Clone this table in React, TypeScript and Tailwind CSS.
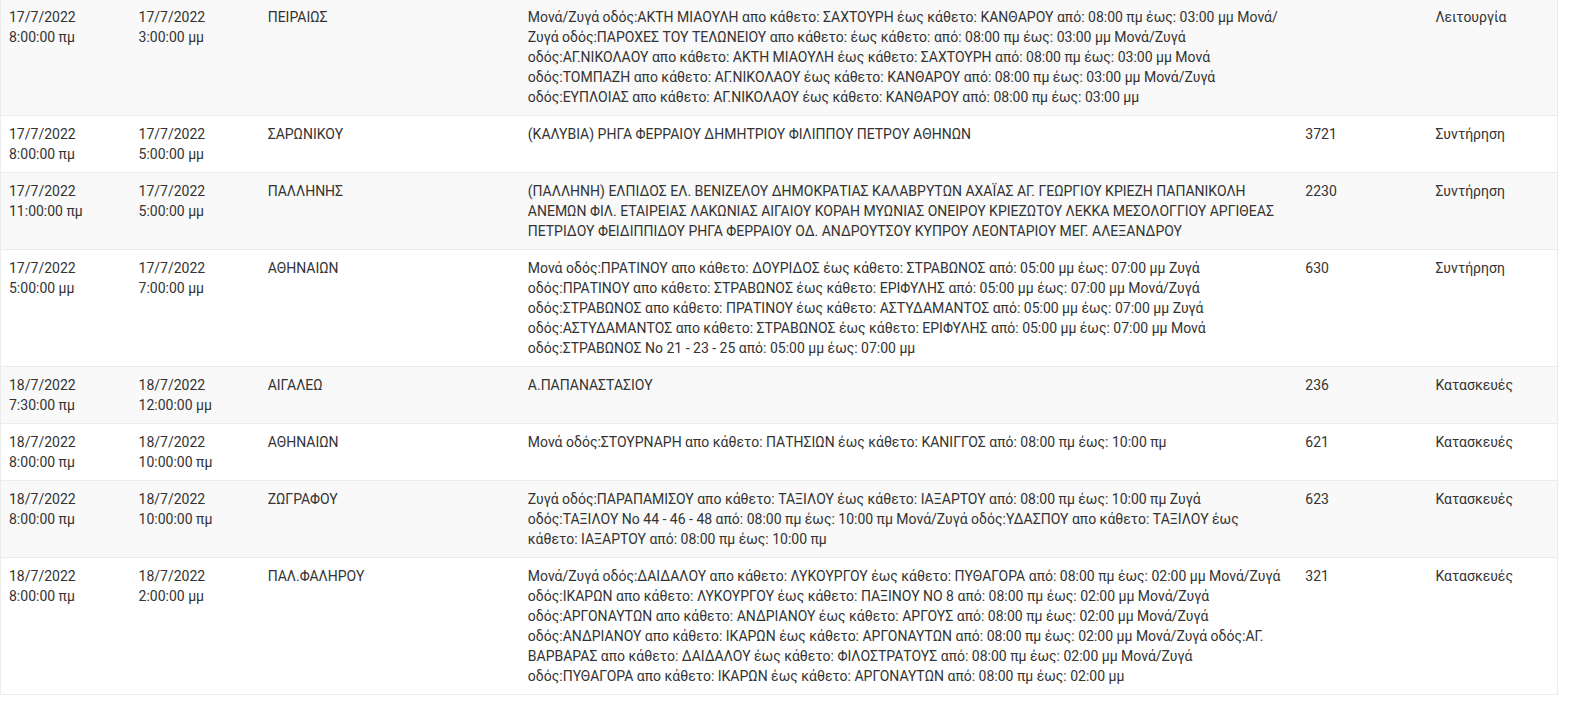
type Outage = {
  from: [string, string]
  to: [string, string]
  area: string
  streets: string
  id: string
  kind: string
}

const rows: Outage[] = [
  {
    from: ['17/7/2022', '8:00:00 πμ'],
    to: ['17/7/2022', '3:00:00 μμ'],
    area: 'ΠΕΙΡΑΙΩΣ',
    streets:
      'Μονά/Ζυγά οδός:ΑΚΤΗ ΜΙΑΟΥΛΗ απο κάθετο: ΣΑΧΤΟΥΡΗ έως κάθετο: ΚΑΝΘΑΡΟΥ από: 08:00 πμ έως: 03:00 μμ Μονά/Ζυγά οδός:ΠΑΡΟΧΕΣ ΤΟΥ ΤΕΛΩΝΕΙΟΥ απο κάθετο: έως κάθετο: από: 08:00 πμ έως: 03:00 μμ Μονά/Ζυγά οδός:ΑΓ.ΝΙΚΟΛΑΟΥ απο κάθετο: ΑΚΤΗ ΜΙΑΟΥΛΗ έως κάθετο: ΣΑΧΤΟΥΡΗ από: 08:00 πμ έως: 03:00 μμ Μονά οδός:ΤΟΜΠΑΖΗ απο κάθετο: ΑΓ.ΝΙΚΟΛΑΟΥ έως κάθετο: ΚΑΝΘΑΡΟΥ από: 08:00 πμ έως: 03:00 μμ Μονά/Ζυγά οδός:ΕΥΠΛΟΙΑΣ απο κάθετο: ΑΓ.ΝΙΚΟΛΑΟΥ έως κάθετο: ΚΑΝΘΑΡΟΥ από: 08:00 πμ έως: 03:00 μμ',
    id: '',
    kind: 'Λειτουργία',
  },
  {
    from: ['17/7/2022', '8:00:00 πμ'],
    to: ['17/7/2022', '5:00:00 μμ'],
    area: 'ΣΑΡΩΝΙΚΟΥ',
    streets: '(ΚΑΛΥΒΙΑ) ΡΗΓΑ ΦΕΡΡΑΙΟΥ ΔΗΜΗΤΡΙΟΥ ΦΙΛΙΠΠΟΥ ΠΕΤΡΟΥ ΑΘΗΝΩΝ',
    id: '3721',
    kind: 'Συντήρηση',
  },
  {
    from: ['17/7/2022', '11:00:00 πμ'],
    to: ['17/7/2022', '5:00:00 μμ'],
    area: 'ΠΑΛΛΗΝΗΣ',
    streets:
      '(ΠΑΛΛΗΝΗ) ΕΛΠΙΔΟΣ ΕΛ. ΒΕΝΙΖΕΛΟΥ ΔΗΜΟΚΡΑΤΙΑΣ ΚΑΛΑΒΡΥΤΩΝ ΑΧΑΪΑΣ ΑΓ. ΓΕΩΡΓΙΟΥ ΚΡΙΕΖΗ ΠΑΠΑΝΙΚΟΛΗ ΑΝΕΜΩΝ ΦΙΛ. ΕΤΑΙΡΕΙΑΣ ΛΑΚΩΝΙΑΣ ΑΙΓΑΙΟΥ ΚΟΡΑΗ ΜΥΩΝΙΑΣ ΟΝΕΙΡΟΥ ΚΡΙΕΖΩΤΟΥ ΛΕΚΚΑ ΜΕΣΟΛΟΓΓΙΟΥ ΑΡΓΙΘΕΑΣ ΠΕΤΡΙΔΟΥ ΦΕΙΔΙΠΠΙΔΟΥ ΡΗΓΑ ΦΕΡΡΑΙΟΥ ΟΔ. ΑΝΔΡΟΥΤΣΟΥ ΚΥΠΡΟΥ ΛΕΟΝΤΑΡΙΟΥ ΜΕΓ. ΑΛΕΞΑΝΔΡΟΥ',
    id: '2230',
    kind: 'Συντήρηση',
  },
  {
    from: ['17/7/2022', '5:00:00 μμ'],
    to: ['17/7/2022', '7:00:00 μμ'],
    area: 'ΑΘΗΝΑΙΩΝ',
    streets:
      'Μονά οδός:ΠΡΑΤΙΝΟΥ απο κάθετο: ΔΟΥΡΙΔΟΣ έως κάθετο: ΣΤΡΑΒΩΝΟΣ από: 05:00 μμ έως: 07:00 μμ Ζυγά οδός:ΠΡΑΤΙΝΟΥ απο κάθετο: ΣΤΡΑΒΩΝΟΣ έως κάθετο: ΕΡΙΦΥΛΗΣ από: 05:00 μμ έως: 07:00 μμ Μονά/Ζυγά οδός:ΣΤΡΑΒΩΝΟΣ απο κάθετο: ΠΡΑΤΙΝΟΥ έως κάθετο: ΑΣΤΥΔΑΜΑΝΤΟΣ από: 05:00 μμ έως: 07:00 μμ Ζυγά οδός:ΑΣΤΥΔΑΜΑΝΤΟΣ απο κάθετο: ΣΤΡΑΒΩΝΟΣ έως κάθετο: ΕΡΙΦΥΛΗΣ από: 05:00 μμ έως: 07:00 μμ Μονά οδός:ΣΤΡΑΒΩΝΟΣ Νο 21 - 23 - 25 από: 05:00 μμ έως: 07:00 μμ',
    id: '630',
    kind: 'Συντήρηση',
  },
  {
    from: ['18/7/2022', '7:30:00 πμ'],
    to: ['18/7/2022', '12:00:00 μμ'],
    area: 'ΑΙΓΑΛΕΩ',
    streets: 'Α.ΠΑΠΑΝΑΣΤΑΣΙΟΥ',
    id: '236',
    kind: 'Κατασκευές',
  },
  {
    from: ['18/7/2022', '8:00:00 πμ'],
    to: ['18/7/2022', '10:00:00 πμ'],
    area: 'ΑΘΗΝΑΙΩΝ',
    streets: 'Μονά οδός:ΣΤΟΥΡΝΑΡΗ απο κάθετο: ΠΑΤΗΣΙΩΝ έως κάθετο: ΚΑΝΙΓΓΟΣ από: 08:00 πμ έως: 10:00 πμ',
    id: '621',
    kind: 'Κατασκευές',
  },
  {
    from: ['18/7/2022', '8:00:00 πμ'],
    to: ['18/7/2022', '10:00:00 πμ'],
    area: 'ΖΩΓΡΑΦΟΥ',
    streets:
      'Ζυγά οδός:ΠΑΡΑΠΑΜΙΣΟΥ απο κάθετο: ΤΑΞΙΛΟΥ έως κάθετο: ΙΑΞΑΡΤΟΥ από: 08:00 πμ έως: 10:00 πμ Ζυγά οδός:ΤΑΞΙΛΟΥ Νο 44 - 46 - 48 από: 08:00 πμ έως: 10:00 πμ Μονά/Ζυγά οδός:ΥΔΑΣΠΟΥ απο κάθετο: ΤΑΞΙΛΟΥ έως κάθετο: ΙΑΞΑΡΤΟΥ από: 08:00 πμ έως: 10:00 πμ',
    id: '623',
    kind: 'Κατασκευές',
  },
  {
    from: ['18/7/2022', '8:00:00 πμ'],
    to: ['18/7/2022', '2:00:00 μμ'],
    area: 'ΠΑΛ.ΦΑΛΗΡΟΥ',
    streets:
      'Μονά/Ζυγά οδός:ΔΑΙΔΑΛΟΥ απο κάθετο: ΛΥΚΟΥΡΓΟΥ έως κάθετο: ΠΥΘΑΓΟΡΑ από: 08:00 πμ έως: 02:00 μμ Μονά/Ζυγά οδός:ΙΚΑΡΩΝ απο κάθετο: ΛΥΚΟΥΡΓΟΥ έως κάθετο: ΠΑΞΙΝΟΥ ΝΟ 8 από: 08:00 πμ έως: 02:00 μμ Μονά/Ζυγά οδός:ΑΡΓΟΝΑΥΤΩΝ απο κάθετο: ΑΝΔΡΙΑΝΟΥ έως κάθετο: ΑΡΓΟΥΣ από: 08:00 πμ έως: 02:00 μμ Μονά/Ζυγά οδός:ΑΝΔΡΙΑΝΟΥ απο κάθετο: ΙΚΑΡΩΝ έως κάθετο: ΑΡΓΟΝΑΥΤΩΝ από: 08:00 πμ έως: 02:00 μμ Μονά/Ζυγά οδός:ΑΓ. ΒΑΡΒΑΡΑΣ απο κάθετο: ΔΑΙΔΑΛΟΥ έως κάθετο: ΦΙΛΟΣΤΡΑΤΟΥΣ από: 08:00 πμ έως: 02:00 μμ Μονά/Ζυγά οδός:ΠΥΘΑΓΟΡΑ απο κάθετο: ΙΚΑΡΩΝ έως κάθετο: ΑΡΓΟΝΑΥΤΩΝ από: 08:00 πμ έως: 02:00 μμ',
    id: '321',
    kind: 'Κατασκευές',
  },
]

export default function App() {
  return (
    <div className="min-h-screen bg-white font-['Roboto','Noto_Sans',sans-serif] text-[14px] leading-5 text-[#333]">
      <table className="-mt-[2px] w-[1558px] table-fixed border-collapse border border-[#ececec]">
        <colgroup>
          <col className="w-[130px]" />
          <col className="w-[129px]" />
          <col className="w-[260px]" />
          <col className="w-[777px]" />
          <col className="w-[130px]" />
          <col className="w-[130px]" />
        </colgroup>
        <tbody>
          {rows.map((r, i) => (
            <tr key={i} className={i % 2 === 0 ? 'bg-[#f9f9f9]' : 'bg-white'}>
              <td className="border-t border-[#ececec] px-2 py-2 align-top">
                {r.from[0]}
                <br />
                {r.from[1]}
              </td>
              <td className="border-t border-[#ececec] px-2 py-2 align-top">
                {r.to[0]}
                <br />
                {r.to[1]}
              </td>
              <td className="border-t border-[#ececec] px-2 py-2 align-top">{r.area}</td>
              <td className="border-t border-[#ececec] px-2 py-2 align-top">{r.streets}</td>
              <td className="border-t border-[#ececec] px-2 py-2 align-top">{r.id}</td>
              <td className="border-t border-[#ececec] px-2 py-2 align-top">{r.kind}</td>
            </tr>
          ))}
        </tbody>
      </table>
    </div>
  )
}
